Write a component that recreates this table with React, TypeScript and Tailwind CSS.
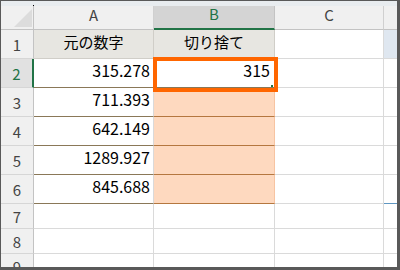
import React from 'react'

const cols = [
  { key: 'A', w: 'w-[120px]' },
  { key: 'B', w: 'w-[121px]' },
  { key: 'C', w: 'w-[109px]' },
]

const values = ['315.278', '711.393', '642.149', '1289.927', '845.688']

function RowHead({ n, h, active }: { n: number; h: string; active?: boolean }) {
  return (
    <div
      className={`${h} w-[33px] shrink-0 flex items-center justify-center text-[15px] leading-none border-b border-b-[#d6d6d6] ${
        active ? 'bg-[#e1e1e1] text-[#217346] border-r-2 border-r-[#217346]' : 'bg-[#f0f0f0] text-[#444] border-r border-r-[#c3c3c3]'
      }`}
    >
      {n}
    </div>
  )
}

export default function App() {
  return (
    <div className="relative flex h-[270px] w-[400px] flex-col overflow-hidden border-t border-l border-r-[3px] border-b-[3px] border-[#595959] bg-white font-['Noto_Sans_CJK_JP','Noto_Sans',sans-serif]">
      {/* strip above the column letters */}
      <div className="relative h-[5px] shrink-0 bg-[#e8ecef]">
        <span className="absolute bottom-0 left-[32px] h-px w-px bg-black" />
      </div>

      {/* column header row */}
      <div className="flex h-[24px] shrink-0">
        <div className="flex w-[33px] shrink-0 items-end justify-end border-r border-b border-[#c3c3c3] bg-[#f0f0f0] pr-[1px] pb-[2px]">
          <svg width="18" height="18" viewBox="0 0 18 18">
            <polygon points="0,18 18,0 18,18" fill="#dcdcdc" />
          </svg>
        </div>
        {cols.map((c) => (
          <div
            key={c.key}
            className={`${c.w} shrink-0 flex items-center justify-center pb-[7px] text-[15px] leading-none border-r ${
              c.key === 'B'
                ? 'bg-[#d4d4d4] text-[#217346] border-r-[#c3c3c3] border-b-2 border-b-[#217346]'
                : 'bg-[#f0f0f0] text-[#444] border-r-[#d0d0d0] border-b border-b-[#c3c3c3]'
            }`}
          >
            {c.key}
          </div>
        ))}
        <div className="w-[13px] shrink-0 border-b border-[#c3c3c3] bg-[#f0f0f0]" />
      </div>

      {/* row 1: headings */}
      <div className="flex h-[29px] shrink-0">
        <RowHead n={1} h="h-[29px]" />
        <div className="flex w-[120px] shrink-0 items-center justify-center border-r border-b border-[#d0cec8] bg-[#e7e6e1] pb-[5px] text-[15px] leading-none text-black">
          元の数字
        </div>
        <div className="flex w-[121px] shrink-0 items-center justify-center border-r border-b border-[#d0cec8] bg-[#e7e6e1] pb-[5px] text-[15px] leading-none text-black">
          切り捨て
        </div>
        <div className="w-[109px] shrink-0 border-r border-b border-[#dadada]" />
        <div className="w-[13px] shrink-0 border-b border-[#dadada] bg-[#dfe7f0]" />
      </div>

      {/* rows 2-6: data */}
      {values.map((v, i) => (
        <div key={v} className="flex h-[29px] shrink-0">
          <RowHead n={i + 2} h="h-[29px]" active={i === 0} />
          <div className="flex w-[120px] shrink-0 items-center justify-end border-r border-r-[#dadada] border-b border-b-[#8a7858] pr-[3px] pb-[6px] text-[16px] leading-none text-black">
            {v}
          </div>
          {i === 0 ? (
            <div className="flex w-[121px] shrink-0 items-center justify-end border-r border-r-[#dadada] border-b border-b-[#8a7858] pr-[4px] pb-[6px] text-[16px] leading-none text-black">
              315
            </div>
          ) : (
            <div className="w-[121px] shrink-0 border-r border-r-[#f7c4a2] border-b border-b-[#b5773f] bg-[#fed9bf]" />
          )}
          <div className="w-[109px] shrink-0 border-r border-b border-[#dadada]" />
          <div className={`w-[13px] shrink-0 border-b ${i === 4 ? 'border-[#5f97c2]' : 'border-[#dadada]'}`} />
        </div>
      ))}

      {/* rows 7-9: empty */}
      {[7, 8, 9].map((n) => (
        <div key={n} className="flex h-[25px] shrink-0">
          <RowHead n={n} h="h-[25px]" />
          <div className="w-[120px] shrink-0 border-r border-b border-[#dadada]" />
          <div className="w-[121px] shrink-0 border-r border-b border-[#dadada]" />
          <div className="w-[109px] shrink-0 border-r border-b border-[#dadada]" />
          <div className="w-[13px] shrink-0 border-b border-[#dadada]" />
        </div>
      ))}

      {/* orange highlight round B2 */}
      <div className="absolute left-[152px] top-[56px] h-[35px] w-[125px] border-[4px] border-[#ff6600]">
        <span className="absolute right-[1px] bottom-[1px] h-[2px] w-[2px] bg-[#217346]" />
      </div>
    </div>
  )
}
